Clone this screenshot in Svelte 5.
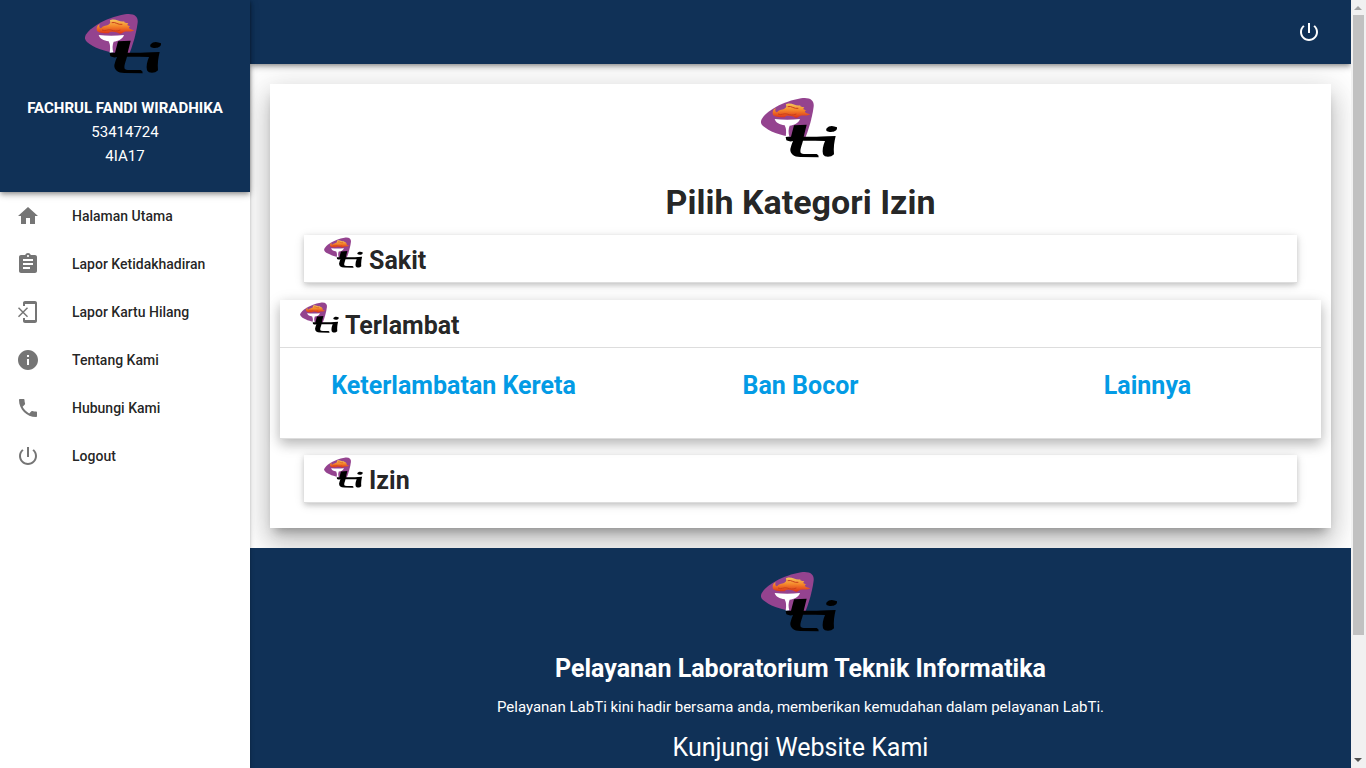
<script>
  const menu = [
    { label: 'Halaman Utama', path: 'M10 20v-6h4v6h5v-8h3L12 3 2 12h3v8z' },
    { label: 'Lapor Ketidakhadiran', path: 'M19 3h-4.18C14.4 1.84 13.3 1 12 1c-1.3 0-2.4.84-2.82 2H5c-1.1 0-2 .9-2 2v14c0 1.1.9 2 2 2h14c1.1 0 2-.9 2-2V5c0-1.1-.9-2-2-2zm-7 0c.55 0 1 .45 1 1s-.45 1-1 1-1-.45-1-1 .45-1 1-1zm2 14H7v-2h7v2zm3-4H7v-2h10v2zm0-4H7V7h10v2z' },
    { label: 'Lapor Kartu Hilang', path: 'M19 1H9c-1.1 0-2 .9-2 2v3h2V4h10v16H9v-2H7v3c0 1.1.9 2 2 2h10c1.1 0 2-.9 2-2V3c0-1.1-.9-2-2-2zM12 8.2l-1-1-4 4-4-4-1 1 4 4-4 4 1 1 4-4 4 4 1-1-4-4 4-4z' },
    { label: 'Tentang Kami', path: 'M12 2C6.48 2 2 6.48 2 12s4.480 10 10 10 10-4.480 10-10S17.520 2 12 2zm1 15h-2v-6h2v6zm0-8h-2V7h2v2z' },
    { label: 'Hubungi Kami', path: 'M6.620 10.790c1.440 2.830 3.760 5.140 6.590 6.590l2.200-2.200c.270-.270.670-.360 1.020-.240 1.120.370 2.330.570 3.570.570.550 0 1 .450 1 1V20c0 .550-.450 1-1 1-9.390 0-17-7.610-17-17 0-.550.450-1 1-1h3.500c.550 0 1 .450 1 1 0 1.250.200 2.450.570 3.570.110.350.030.740-.250 1.020l-2.200 2.200z' },
    { label: 'Logout', path: 'M13 3h-2v10h2V3zm4.830 2.170l-1.420 1.420C17.990 7.860 19 9.810 19 12c0 3.870-3.130 7-7 7s-7-3.130-7-7c0-2.190 1.010-4.140 2.580-5.420L6.170 5.170C4.230 6.820 3 9.260 3 12c0 4.970 4.030 9 9 9s9-4.030 9-9c0-2.740-1.230-5.180-3.170-6.830z' }
  ];

  const categories = [
    { name: 'Sakit', reasons: ['Rawat Jalan', 'Rawat Inap'] },
    { name: 'Terlambat', reasons: ['Keterlambatan Kereta', 'Ban Bocor', 'Lainnya'] },
    { name: 'Izin', reasons: ['Keluarga', 'Lainnya'] }
  ];

  let open = $state('Terlambat');
</script>

{#snippet logo(small)}
  <svg class="logo" class:small viewBox="33 21 240 183" aria-hidden="true">
    <defs>
      <linearGradient id="flame" x1="0" y1="0" x2="0" y2="1">
        <stop offset="0" stop-color="#f6c75a" />
        <stop offset=".45" stop-color="#f58a2c" />
        <stop offset="1" stop-color="#dc3018" />
      </linearGradient>
    </defs>
    <path fill="#94438f" d="M33 94C36 72 92 35 153 25C180 21 193 31 191 50C187 80 177 116 166 143C126 145 82 134 55 119C39 110 32 103 33 94Z" />
    <path fill="url(#flame)" d="M69 75C66 66 69 58 77 54C74 62 77 68 82 66C89 57 98 61 106 54C114 46 102 43 112 41C128 38 138 50 151 46C148 52 160 50 163 53C157 55 161 60 169 60C162 64 163 69 181 73C170 80 160 74 150 78C142 83 138 86 131 80C119 79 111 74 104 82C96 80 83 85 69 75Z" />
    <path d="M84 72C94 77 101 69 111 72S128 77 139 72M113 50C124 46 132 58 145 55" fill="none" stroke="#c9401c" stroke-width="3" />
    <path fill="#fff" d="M74 87Q112 91 150 87C146 99 132 106 119 107Q113 121 118 139L107 140Q111 120 104 106C89 104 77 98 74 87Z" />
    <path fill="#000" d="M132 106L170 104L161 140L200 140Q213 140 233 139L257 138C253 154 250 172 252 193C243 203 224 203 219 193C216 182 219 166 225 153Q210 152 195 152L159 152C156 165 149 178 152 188Q155 193 173 192L200 192Q207 194 206 202L151 201C131 201 120 191 121 177C123 168 126 160 129 153Q120 156 109 151L107 141L123 140Z" />
    <path fill="#000" d="M229 116C238 105 250 107 261 112C262 122 253 126 243 126C233 125 227 124 229 116Z" />
  </svg>
{/snippet}

{#snippet icon(path)}
  <svg class="icon" viewBox="0 0 24 24" aria-hidden="true"><path d={path} /></svg>
{/snippet}

<div class="shell">
  <aside>
    <div class="profile">
      {@render logo(false)}
      <strong>FACHRUL FANDI WIRADHIKA</strong>
      <span>53414724</span>
      <span>4IA17</span>
    </div>
    <nav>
      {#each menu as item}
        <a href="#menu">{@render icon(item.path)}{item.label}</a>
      {/each}
    </nav>
  </aside>

  <div class="page">
    <header>
      <button aria-label="Logout">{@render icon(menu[5].path)}</button>
    </header>
    <main>
      <section class="card">
        {@render logo(false)}
        <h1>Pilih Kategori Izin</h1>
        <ul>
          {#each categories as category}
            <li class:active={open === category.name}>
              <button
                class="category"
                aria-expanded={open === category.name}
                onclick={() => (open = open === category.name ? '' : category.name)}
              >
                {@render logo(true)}<span>{category.name}</span>
              </button>
              {#if open === category.name}
                <div class="reasons">
                  {#each category.reasons as reason}<a href="#izin">{reason}</a>{/each}
                </div>
              {/if}
            </li>
          {/each}
        </ul>
      </section>
    </main>
    <footer>
      {@render logo(false)}
      <h2>Pelayanan Laboratorium Teknik Informatika</h2>
      <p>Pelayanan LabTi kini hadir bersama anda, memberikan kemudahan dalam pelayanan LabTi.</p>
      <h3>Kunjungi Website Kami</h3>
    </footer>
  </div>

  <div class="scrollbar" aria-hidden="true">
    <svg viewBox="0 0 15 15"><path fill="#a3a3a3" d="M3 10h8L7 6z" /></svg>
    <div class="track"><div class="thumb"></div></div>
    <svg viewBox="0 0 15 15"><path fill="#505050" d="M3 5h8L7 9z" /></svg>
  </div>
</div>

<style>
  :global(body) {
    margin: 0;
    overflow: hidden;
  }
  .shell {
    display: grid;
    grid-template-columns: 250px minmax(0, 1fr) 15px;
    height: 100vh;
    overflow: hidden;
    background: #fff;
    color: rgba(0, 0, 0, 0.87);
    font: 15px/24px Roboto, sans-serif;
  }
  a {
    text-decoration: none;
  }
  button {
    border: 0;
    background: none;
    color: inherit;
    font: inherit;
    cursor: pointer;
  }
  h1, h2, h3, p, ul {
    margin: 0;
    padding: 0;
  }
  .logo {
    display: block;
    flex: none;
    width: 80px;
    height: 61px;
  }
  .logo.small {
    width: 41px;
    height: 31px;
  }
  .icon {
    flex: none;
    width: 24px;
    height: 24px;
    fill: currentColor;
  }
  aside {
    z-index: 2;
    background: #fff;
    box-shadow: 0 2px 2px 0 rgba(0, 0, 0, 0.14), 0 3px 1px -2px rgba(0, 0, 0, 0.12), 0 1px 5px 0 rgba(0, 0, 0, 0.2);
  }
  .profile {
    box-sizing: border-box;
    display: flex;
    flex-direction: column;
    align-items: center;
    height: 192px;
    padding-top: 13px;
    background: #103157;
    color: #fff;
    box-shadow: 0 4px 5px 0 rgba(0, 0, 0, 0.14), 0 1px 10px 0 rgba(0, 0, 0, 0.12), 0 2px 4px -1px rgba(0, 0, 0, 0.3);
  }
  .profile strong {
    margin-top: 22px;
    font-weight: 700;
  }
  nav a {
    display: flex;
    align-items: center;
    gap: 32px;
    height: 48px;
    padding: 0 16px;
    color: rgba(0, 0, 0, 0.87);
    font-size: 14px;
    font-weight: 500;
  }
  nav .icon {
    color: #757575;
  }
  .page {
    display: flex;
    flex-direction: column;
    min-height: 0;
    overflow: hidden;
  }
  header {
    z-index: 1;
    flex: none;
    display: flex;
    align-items: center;
    justify-content: flex-end;
    height: 64px;
    padding-right: 30px;
    background: #103157;
    color: #fff;
    box-shadow: 0 4px 5px 0 rgba(0, 0, 0, 0.14), 0 1px 10px 0 rgba(0, 0, 0, 0.12), 0 2px 4px -1px rgba(0, 0, 0, 0.3);
  }
  header button {
    display: flex;
    padding: 0;
  }
  main {
    flex: none;
    padding: 20px;
  }
  .card {
    padding: 13px 10px 25px;
    background: #fff;
    box-shadow: 0 16px 24px 2px rgba(0, 0, 0, 0.14), 0 6px 30px 5px rgba(0, 0, 0, 0.12), 0 8px 10px -5px rgba(0, 0, 0, 0.3);
  }
  .card > .logo {
    margin: 0 auto;
  }
  h1 {
    margin: 24px 0 13px;
    font-size: 34px;
    font-weight: 700;
    line-height: 40px;
    text-align: center;
  }
  ul {
    list-style: none;
  }
  li {
    margin: 0 24px;
    box-shadow: 0 2px 5px 0 rgba(0, 0, 0, 0.16), 0 2px 10px 0 rgba(0, 0, 0, 0.12);
  }
  li.active {
    margin: 17px 0 16px;
    box-shadow: 0 5px 11px 0 rgba(0, 0, 0, 0.18), 0 4px 15px 0 rgba(0, 0, 0, 0.15);
  }
  .category {
    box-sizing: border-box;
    display: flex;
    align-items: flex-start;
    gap: 4px;
    width: 100%;
    height: 48px;
    padding: 2px 20px;
    border-bottom: 1px solid #ddd;
    font-size: 25px;
    font-weight: 700;
  }
  .category span {
    padding-top: 12px;
  }
  .reasons {
    box-sizing: border-box;
    display: grid;
    grid-auto-columns: minmax(0, 1fr);
    grid-auto-flow: column;
    height: 91px;
    padding: 26px 0 24px;
    border-bottom: 1px solid #ddd;
    font-size: 25px;
    font-weight: 700;
    text-align: center;
  }
  .reasons a {
    color: #039be5;
  }
  footer {
    flex: 1 0 auto;
    display: flex;
    flex-direction: column;
    align-items: center;
    padding-top: 23px;
    background: #103157;
    color: #fff;
    text-align: center;
  }
  h2 {
    margin: 25px 0 14px;
    font-size: 25px;
    font-weight: 700;
  }
  h3 {
    margin-top: 17px;
    font-size: 25px;
    font-weight: 400;
  }
  .scrollbar {
    z-index: 3;
    display: flex;
    flex-direction: column;
    background: #f1f1f1;
  }
  .scrollbar svg {
    flex: none;
    width: 15px;
    height: 15px;
  }
  .track {
    flex: 1;
    padding: 0 2px;
  }
  .thumb {
    height: 84%;
    background: #c1c1c1;
  }
</style>
